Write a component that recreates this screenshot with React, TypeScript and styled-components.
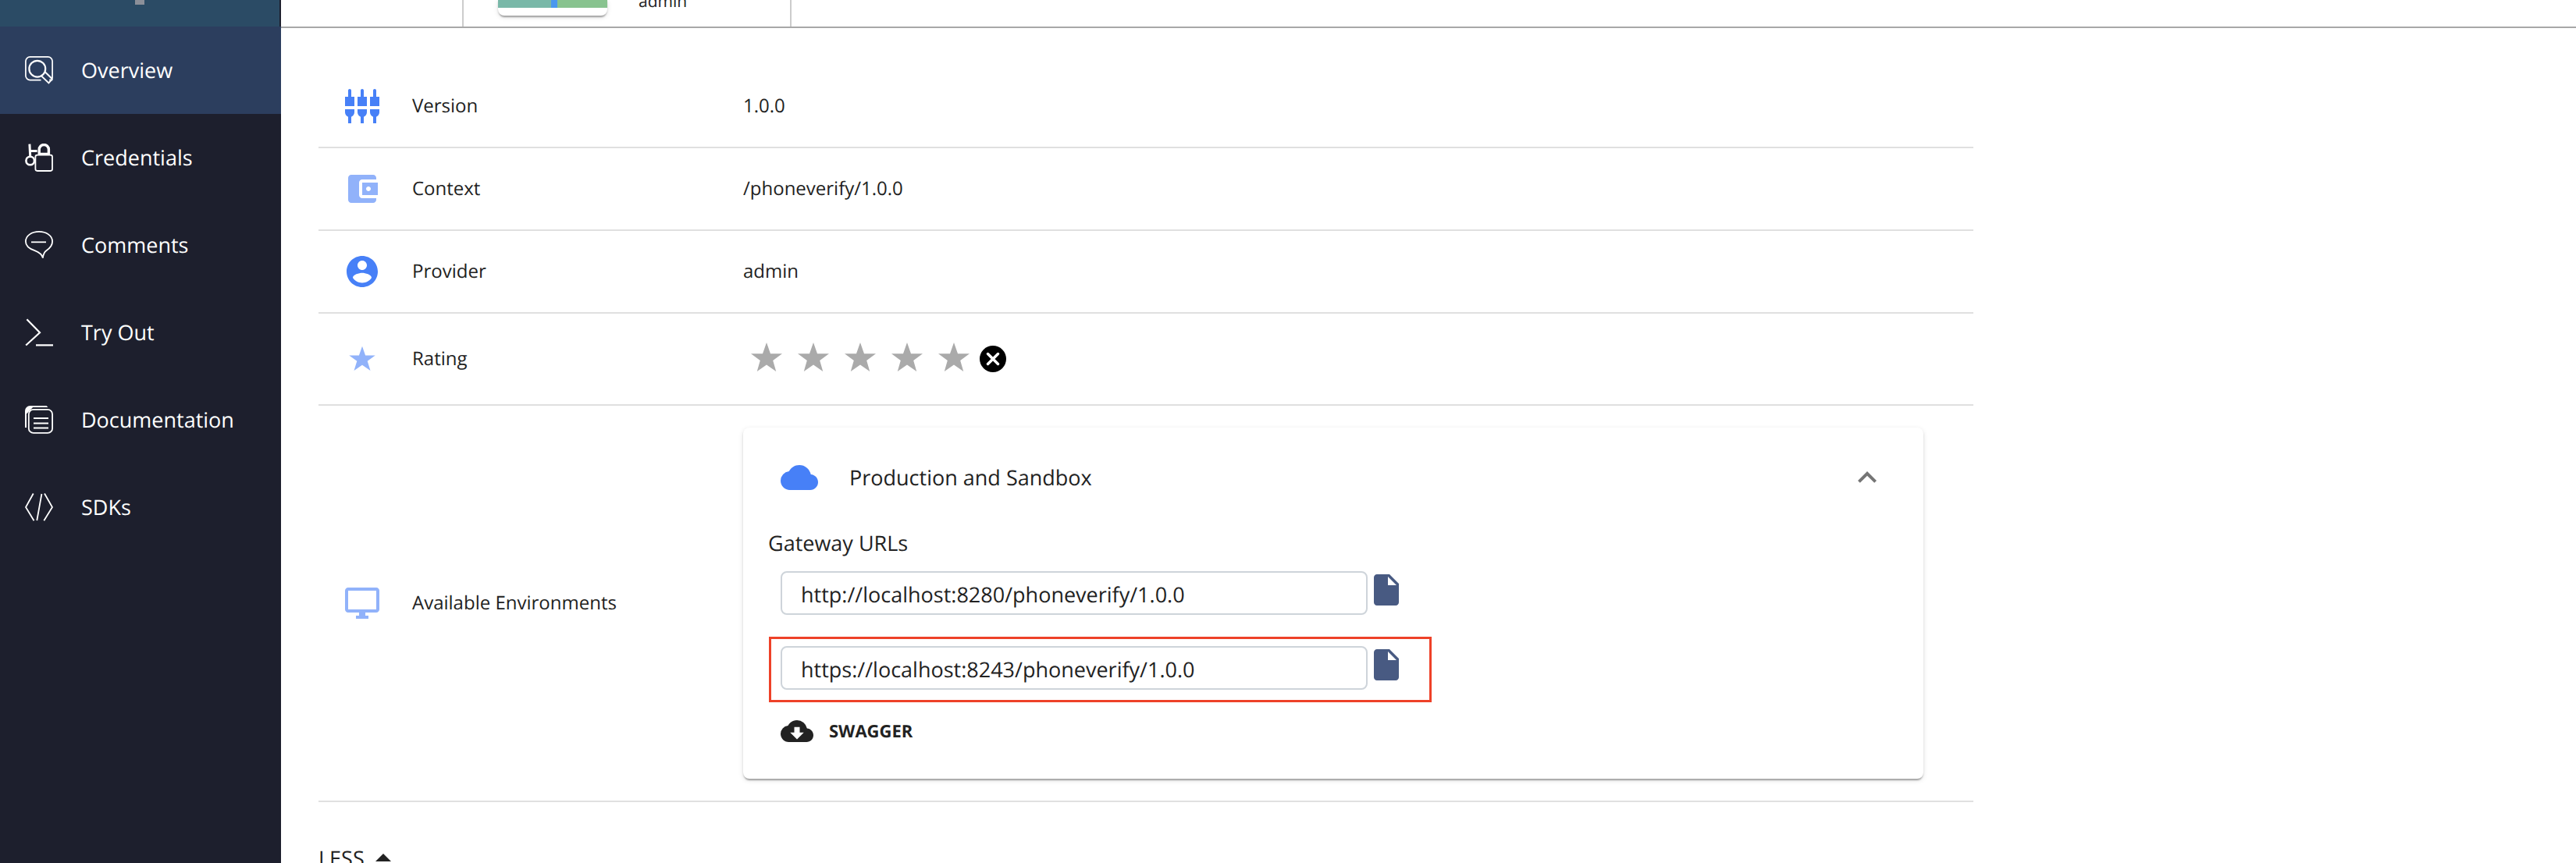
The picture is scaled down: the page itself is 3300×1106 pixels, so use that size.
import React from "react";
import styled, { createGlobalStyle } from "styled-components";
import {
  MdArrowDropUp,
  MdCloud,
  MdCloudDownload,
  MdExpandLess,
} from "react-icons/md";

const color = {
  text: "#222222",
  primary: "#4780f7",
  primaryLight: "#91b2fa",
  sidebar: "#1d1f2d",
  active: "#2c3e5e",
  brand: "#2b4b65",
  divider: "#e0e0e0",
  copy: "#485a82",
};

const GlobalStyle = createGlobalStyle`
  *, *::before, *::after { box-sizing: border-box; }
  body {
    margin: 0;
    background: #ffffff;
    color: ${color.text};
    font-family: "Open Sans", "Noto Sans", sans-serif;
    font-size: 24px;
    line-height: 32px;
    text-rendering: geometricPrecision;
  }
  button, input { text-rendering: inherit; }
  button {
    margin: 0;
    padding: 0;
    border: 0;
    background: none;
    color: inherit;
    font: inherit;
    cursor: pointer;
  }
  svg { display: block; flex: none; }
`;

const Shell = styled.div`
  display: flex;
  height: 100vh;
  overflow: hidden;
`;

const Sidebar = styled.nav`
  flex: none;
  width: 360px;
  background: ${color.sidebar};
`;

const Brand = styled.div`
  display: flex;
  justify-content: center;
  height: 34px;
  margin-right: 2px;
  background: ${color.brand};
`;

const BrandMark = styled.span`
  width: 12px;
  height: 6px;
  background: #8b8f99;
`;

const NavLink = styled.a<{ $active?: boolean }>`
  display: flex;
  align-items: center;
  gap: 36px;
  height: 112px;
  padding: 0 32px;
  background: ${(p) => (p.$active ? color.active : "transparent")};
  color: #ffffff;
  font-size: 27px;
  text-decoration: none;
`;

const Main = styled.main`
  flex: 1;
  min-width: 0;
`;

const Header = styled.header`
  display: flex;
  align-items: stretch;
  height: 36px;
  padding-left: 232px;
  overflow: hidden;
  border-bottom: 2px solid #a8a8a8;
`;

const HeaderInfo = styled.div`
  display: flex;
  align-items: flex-end;
  gap: 40px;
  width: 422px;
  padding-left: 44px;
  border: solid #cccccc;
  border-width: 0 2px;
`;

const Thumb = styled.div`
  display: flex;
  align-items: flex-start;
  width: 140px;
  height: 20px;
  margin-bottom: 14px;
  border-radius: 0 0 8px 8px;
  background: #ffffff;
  box-shadow: 0 4px 2px -2px rgba(0, 0, 0, 0.2), 0 2px 2px rgba(0, 0, 0, 0.14),
    0 2px 6px rgba(0, 0, 0, 0.12);
`;

const ThumbBand = styled.span<{ $color: string; $width?: number }>`
  flex: ${(p) => (p.$width ? `0 0 ${p.$width}px` : "1")};
  height: 10px;
  background: ${(p) => p.$color};
`;

const Owner = styled.span`
  padding-bottom: 18px;
  font-size: 21px;
  line-height: 28px;
`;

const Content = styled.section`
  padding: 48px;
`;

const Table = styled.table`
  width: 100%;
  max-width: 2120px;
  border-collapse: separate;
  border-spacing: 0;
  table-layout: fixed;
`;

const cell = `
  padding: 28px 32px;
  border-bottom: 2px solid ${color.divider};
  text-align: left;
  font-weight: 400;
`;

const LabelCell = styled.th`
  ${cell}
  width: 512px;
`;

const ValueCell = styled.td`
  ${cell}
  padding-right: 64px;
`;

const Label = styled.div`
  display: flex;
  align-items: center;
  gap: 40px;
`;

const Rating = styled.div`
  display: flex;
  align-items: center;
  height: 60px;
`;

const StarButton = styled.button`
  display: flex;
  justify-content: center;
  width: 60px;
`;

const Card = styled.article`
  display: flex;
  flex-direction: column;
  padding: 40px 48px;
  border-radius: 8px;
  background: #ffffff;
  box-shadow: 0 4px 2px -2px rgba(0, 0, 0, 0.2), 0 2px 2px rgba(0, 0, 0, 0.14),
    0 2px 6px rgba(0, 0, 0, 0.12);
  font-size: 27px;
`;

const CardHeader = styled.header`
  display: flex;
  align-items: center;
  gap: 40px;
`;

const CardTitle = styled.h2`
  flex: 1;
  margin: 0;
  font-size: 27px;
  font-weight: 400;
`;

const Caption = styled.h3`
  margin: 40px 0 16px -16px;
  font-size: 27px;
  font-weight: 400;
  line-height: 40px;
`;

const UrlList = styled.div`
  display: flex;
  flex-direction: column;
  align-items: flex-start;
  gap: 40px;
`;

const UrlRow = styled.div<{ $highlight?: boolean }>`
  position: relative;
  display: flex;
  align-items: flex-start;
  width: 800px;
  max-width: 100%;

  &::after {
    content: ${(p) => (p.$highlight ? '""' : "none")};
    position: absolute;
    inset: -12px -34px -16px -15px;
    border: 3px solid #ee4128;
    pointer-events: none;
  }
`;

const UrlInput = styled.input`
  flex: 1;
  min-width: 0;
  height: 56px;
  padding: 2px 24px 0;
  border: 2px solid #ced4da;
  border-radius: 8px;
  background: #ffffff;
  color: inherit;
  font: inherit;
  outline: none;
`;

const DownloadButton = styled.button`
  display: flex;
  align-items: center;
  align-self: flex-start;
  gap: 20px;
  margin-top: 32px;
  font-size: 22px;
  font-weight: 700;
`;

const LessButton = styled.button`
  display: flex;
  align-items: center;
  margin-top: 48px;
  font-size: 27px;
`;

type IconProps = { children: React.ReactNode };

const NavIcon = ({ children }: IconProps) => (
  <svg
    width="36"
    height="36"
    viewBox="0 0 36 36"
    fill="none"
    stroke="#ffffff"
    strokeWidth="1.8"
    aria-hidden="true"
  >
    {children}
  </svg>
);

const OverviewIcon = () => (
  <NavIcon>
    <path d="M20.5 30.6H6.5a5.6 5.6 0 0 1-5.6-5.6V6.5A5.6 5.6 0 0 1 6.5.9h23a5.6 5.6 0 0 1 5.6 5.6V28" strokeWidth="1.7" />
    <circle cx="15.8" cy="16.2" r="10.4" strokeWidth="2.2" />
    <path d="M26 20.5l9 8.7-4.6 5.2-9.6-9.3M35.3 30.6h-4" strokeWidth="2" />
  </NavIcon>
);

const CredentialsIcon = () => (
  <NavIcon>
    <path d="M5.9.6l.8 15.5M6 9.6h9.6" strokeWidth="3" />
    <circle cx="6.7" cy="22" r="5.3" strokeWidth="2.6" />
    <path d="M18.2 13.4V7.6a6 6 0 0 1 12.2 0v5.8M16.8 13.4h15" strokeWidth="3.4" />
    <rect x="13.4" y="14.6" width="21.6" height="20.4" rx="2.4" fill={color.sidebar} strokeWidth="1.8" />
  </NavIcon>
);

const CommentsIcon = () => (
  <NavIcon>
    <path
      d="M22.9 34.6C22 31 18.5 27.5 12.5 25.2C5 22.6 .9 19.2 .9 13.5C.9 6 8.7 .9 18 .9S35.1 6 35.1 13.5C35.1 18.6 32 22 27.6 25C24 27.6 23.3 30 22.9 34.6Z"
      strokeWidth="1.8"
    />
    <path d="M8 14.3h19" />
  </NavIcon>
);

const TryOutIcon = () => (
  <NavIcon>
    <path d="M2.4 1.3L19 18.3L1.2 34.5M14 34.3h22" strokeWidth="2.2" />
  </NavIcon>
);

const DocumentationIcon = () => (
  <NavIcon>
    <path d="M0 28V6.5A6.5 6.5 0 0 1 6.5 0H27.5l2 2H9.5A7.5 7.5 0 0 0 2 9.5V28z" fill="#ffffff" stroke="none" />
    <path d="M1 10V4L4 1h7L2.5 10z" fill="#ffffff" stroke="none" />
    <rect x="4.8" y="4.9" width="30.3" height="30" rx="6" fill={color.sidebar} strokeWidth="1.8" />
    <path d="M11 16h19M11 22.5h19M11 28.5h19" />
  </NavIcon>
);

const SdksIcon = () => (
  <NavIcon>
    <path d="M10.7 .5L1 18L11.5 35.3M21.4 1L15.3 35M25 .5L35 18L24.3 35.3" />
  </NavIcon>
);

type MdIconProps = { size?: number; fill: string; d: string };

const MaterialIcon = ({ size = 48, fill, d }: MdIconProps) => (
  <svg width={size} height={size} viewBox="0 0 24 24" fill={fill} aria-hidden="true">
    <path d={d} />
  </svg>
);

const paths = {
  version:
    "M5 2c0-.55-.45-1-1-1s-1 .45-1 1v4H1v6h6V6H5V2zm4 14c0 1.3.84 2.4 2 2.82V23h2v-4.18c1.16-.41 2-1.51 2-2.82v-2H9v2zm-8 0c0 1.3.84 2.4 2 2.82V23h2v-4.18C6.16 18.4 7 17.3 7 16v-2H1v2zM21 6V2c0-.55-.45-1-1-1s-1 .45-1 1v4h-2v6h6V6h-2zm-8-4c0-.55-.45-1-1-1s-1 .45-1 1v4H9v6h6V6h-2V2zm4 14c0 1.3.84 2.4 2 2.82V23h2v-4.18c1.16-.41 2-1.51 2-2.82v-2h-6v2z",
  context:
    "M21 18v1c0 1.1-.9 2-2 2H5c-1.11 0-2-.9-2-2V5c0-1.1.89-2 2-2h14c1.1 0 2 .9 2 2v1h-9c-1.11 0-2 .9-2 2v8c0 1.1.89 2 2 2h9zm-9-2h10V8H12v8zm4-2.5c-.83 0-1.5-.67-1.5-1.5s.67-1.5 1.5-1.5 1.5.67 1.5 1.5-.67 1.5-1.5 1.5z",
  provider:
    "M12 2C6.48 2 2 6.48 2 12s4.48 10 10 10 10-4.48 10-10S17.52 2 12 2zm0 3c1.66 0 3 1.34 3 3s-1.34 3-3 3-3-1.34-3-3 1.34-3 3-3zm0 14.2c-2.5 0-4.71-1.28-6-3.22.03-1.99 4-3.08 6-3.08 1.99 0 5.97 1.09 6 3.08-1.29 1.94-3.5 3.22-6 3.22z",
  environments:
    "M21 2H3c-1.1 0-2 .9-2 2v12c0 1.1.9 2 2 2h7v2H8v2h8v-2h-2v-2h7c1.1 0 2-.9 2-2V4c0-1.1-.9-2-2-2zm0 14H3V4h18v12z",
  file: "M6 2c-1.1 0-1.99.9-1.99 2L4 20c0 1.1.89 2 1.99 2H18c1.1 0 2-.9 2-2V8l-6-6H6zm7 7V3.5L18.5 9H13z",
};

const RateIcon = () => (
  <svg width="48" height="48" viewBox="0 0 48 48" fill={color.primaryLight} aria-hidden="true">
    <path d="M24 7.7L28.1 19.5H40.7L30.7 26.8L34.5 39L24 31.8L13.5 39L17.3 26.8L7.3 19.5H19.9Z" />
  </svg>
);

const StarIcon = () => (
  <svg width="40" height="44" viewBox="0 0 40 44" fill="#aaaaaa" aria-hidden="true">
    <path d="M20 1l5 14.2h15l-11.8 8.8 4 14-12.2-8.4L7.8 38l4-14L0 15.2h15z" />
  </svg>
);

const CancelIcon = () => (
  <svg width="40" height="40" viewBox="0 0 40 40" aria-hidden="true">
    <circle cx="20" cy="20" r="17" fill="#000000" />
    <path d="M13.5 13.5l13 13M26.5 13.5l-13 13" stroke="#ffffff" strokeWidth="3.4" strokeLinecap="round" />
  </svg>
);

const navItems = [
  { label: "Overview", icon: <OverviewIcon />, active: true },
  { label: "Credentials", icon: <CredentialsIcon /> },
  { label: "Comments", icon: <CommentsIcon /> },
  { label: "Try Out", icon: <TryOutIcon /> },
  { label: "Documentation", icon: <DocumentationIcon /> },
  { label: "SDKs", icon: <SdksIcon /> },
];

const urls = [
  { id: "http-url", name: "HTTP gateway URL", value: "http://localhost:8280/phoneverify/1.0.0" },
  { id: "https-url", name: "HTTPS gateway URL", value: "https://localhost:8243/phoneverify/1.0.0", highlight: true },
];

type RowProps = { icon: React.ReactNode; label: string; children: React.ReactNode };

const InfoRow = ({ icon, label, children }: RowProps) => (
  <tr>
    <LabelCell scope="row">
      <Label>
        {icon}
        {label}
      </Label>
    </LabelCell>
    <ValueCell>{children}</ValueCell>
  </tr>
);

export default function App() {
  return (
    <>
      <GlobalStyle />
      <Shell>
        <Sidebar>
          <Brand>
            <BrandMark />
          </Brand>
          {navItems.map((item) => (
            <NavLink key={item.label} href="#" $active={item.active}>
              {item.icon}
              {item.label}
            </NavLink>
          ))}
        </Sidebar>
        <Main>
          <Header>
            <HeaderInfo>
              <Thumb>
                <ThumbBand $color="#79b8a8" $width={68} />
                <ThumbBand $color="#4a98ef" $width={8} />
                <ThumbBand $color="#88c38f" />
              </Thumb>
              <Owner>admin</Owner>
            </HeaderInfo>
          </Header>
          <Content>
            <Table>
              <tbody>
                <InfoRow icon={<MaterialIcon fill={color.primary} d={paths.version} />} label="Version">
                  1.0.0
                </InfoRow>
                <InfoRow icon={<MaterialIcon fill={color.primaryLight} d={paths.context} />} label="Context">
                  /phoneverify/1.0.0
                </InfoRow>
                <InfoRow icon={<MaterialIcon fill={color.primary} d={paths.provider} />} label="Provider">
                  admin
                </InfoRow>
                <InfoRow icon={<RateIcon />} label="Rating">
                  <Rating>
                    {[1, 2, 3, 4, 5].map((n) => (
                      <StarButton key={n} type="button" aria-label={`Rate ${n} of 5`}>
                        <StarIcon />
                      </StarButton>
                    ))}
                    <button type="button" aria-label="Clear rating">
                      <CancelIcon />
                    </button>
                  </Rating>
                </InfoRow>
                <InfoRow
                  icon={<MaterialIcon fill={color.primaryLight} d={paths.environments} />}
                  label="Available Environments"
                >
                  <Card>
                    <CardHeader>
                      <MdCloud size={48} color={color.primary} />
                      <CardTitle>Production and Sandbox</CardTitle>
                      <button type="button" aria-label="Collapse">
                        <MdExpandLess size={48} color="#757575" />
                      </button>
                    </CardHeader>
                    <Caption>Gateway URLs</Caption>
                    <UrlList>
                      {urls.map((url) => (
                        <UrlRow key={url.id} $highlight={url.highlight}>
                          <UrlInput id={url.id} aria-label={url.name} defaultValue={url.value} readOnly />
                          <button type="button" aria-label={`Copy ${url.name}`}>
                            <MaterialIcon fill={color.copy} d={paths.file} />
                          </button>
                        </UrlRow>
                      ))}
                    </UrlList>
                    <DownloadButton type="button">
                      <MdCloudDownload size={42} />
                      SWAGGER
                    </DownloadButton>
                  </Card>
                </InfoRow>
              </tbody>
            </Table>
            <LessButton type="button">
              LESS
              <MdArrowDropUp size={48} />
            </LessButton>
          </Content>
        </Main>
      </Shell>
    </>
  );
}
